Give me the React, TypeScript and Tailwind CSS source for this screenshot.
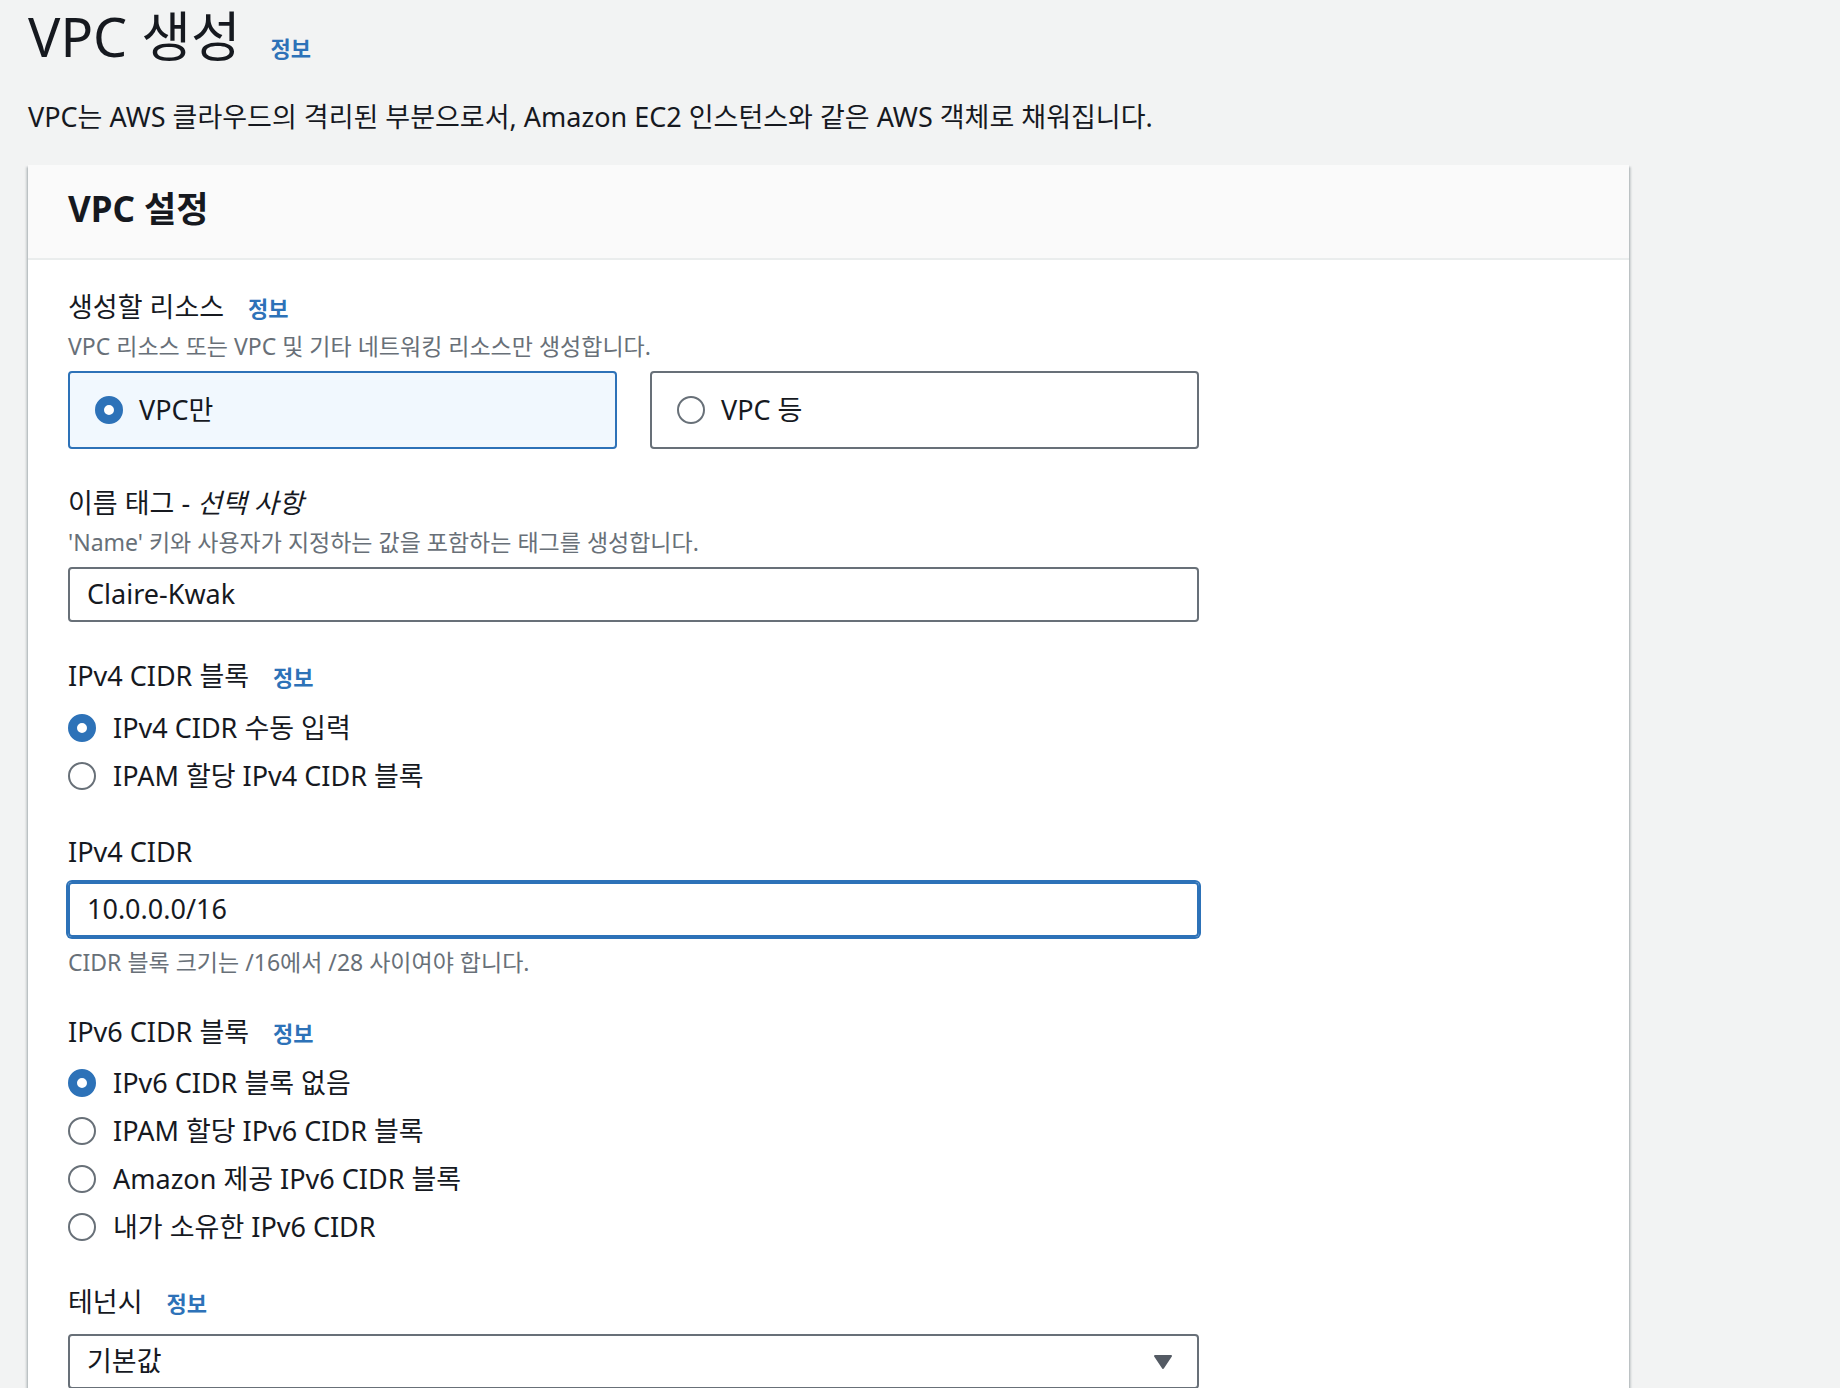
const InfoLink = ({ big }: { big?: boolean }) => (
  <a className={`${big ? "ml-[30px]" : "ml-[24px]"} text-[22px] font-bold leading-none text-[#2d72b8]`}>정보</a>
);

const Radio = ({ checked }: { checked?: boolean }) =>
  checked ? (
    <span className="box-border block h-[28px] w-[28px] shrink-0 rounded-full border-[9px] border-[#2d72b8] bg-white"></span>
  ) : (
    <span className="box-border block h-[28px] w-[28px] shrink-0 rounded-full border-2 border-[#687078] bg-white"></span>
  );

const RadioRow = ({ label, checked }: { label: string; checked?: boolean }) => (
  <div className="flex h-[48px] items-center gap-[17px]">
    <Radio checked={checked}></Radio>
    <span className="text-[27px] text-[#16191f]">{label}</span>
  </div>
);

const Label = ({ children, info }: { children: React.ReactNode; info?: boolean }) => (
  <div className="flex h-[36px] items-baseline text-[27px] leading-[36px] text-[#16191f]">
    <span>{children}</span>
    {info && <InfoLink></InfoLink>}
  </div>
);

const Hint = ({ children }: { children: React.ReactNode }) => (
  <p className="text-[23px] leading-[32px] text-[#687078]">{children}</p>
);

export default function App() {
  return (
    <div className="min-h-screen bg-[#f2f3f3] pl-[28px] pt-[4px] font-['Noto_Sans','Noto_Sans_CJK_KR',sans-serif] text-[#16191f]">
      <div className="flex items-baseline">
        <h1 className="text-[54px] leading-[64px]">VPC 생성</h1>
        <InfoLink big></InfoLink>
      </div>
      <p className="mt-[31px] text-[27px] leading-[36px]">
        VPC는 AWS 클라우드의 격리된 부분으로서, Amazon EC2 인스턴스와 같은 AWS 객체로 채워집니다.
      </p>

      <div className="mt-[30px] w-[1601px] bg-white shadow-[0_2px_2px_0_rgba(0,28,36,0.3),2px_2px_2px_0_rgba(0,28,36,0.15),-2px_2px_2px_0_rgba(0,28,36,0.15)]">
        <div className="border-b-2 border-[#eaeded] bg-[#fafafa] px-[40px] pb-[27px] pt-[22px]">
          <h2 className="text-[35px] font-bold leading-[44px]">VPC 설정</h2>
        </div>

        <div className="w-[1211px] px-[40px] pb-[60px] pt-[29px]">
          <Label info>생성할 리소스</Label>
          <div className="mt-[5px]">
            <Hint>VPC 리소스 또는 VPC 및 기타 네트워킹 리소스만 생성합니다.</Hint>
          </div>
          <div className="mt-[9px] flex gap-[33px]">
            <div className="flex h-[78px] w-[549px] items-center gap-[16px] rounded-[4px] border-2 border-[#2d72b8] bg-[#f1f8fe] pl-[25px]">
              <Radio checked></Radio>
              <span className="text-[27px]">VPC만</span>
            </div>
            <div className="flex h-[78px] w-[549px] items-center gap-[16px] rounded-[4px] border-2 border-[#687078] bg-white pl-[25px]">
              <Radio></Radio>
              <span className="text-[27px]">VPC 등</span>
            </div>
          </div>

          <div className="mt-[36px]">
            <Label>
              이름 태그 - <i>선택 사항</i>
            </Label>
          </div>
          <div className="mt-[5px]">
            <Hint>'Name' 키와 사용자가 지정하는 값을 포함하는 태그를 생성합니다.</Hint>
          </div>
          <div className="mt-[9px] flex h-[55px] items-center rounded-[4px] border-2 border-[#687078] px-[17px] text-[27px]">
            Claire-Kwak
          </div>

          <div className="mt-[36px]">
            <Label info>IPv4 CIDR 블록</Label>
          </div>
          <div className="mt-[10px]">
            <RadioRow checked label="IPv4 CIDR 수동 입력"></RadioRow>
            <RadioRow label="IPAM 할당 IPv4 CIDR 블록"></RadioRow>
          </div>

          <div className="mt-[34px]">
            <Label>IPv4 CIDR</Label>
          </div>
          <div className="mt-[12px] flex h-[55px] items-center rounded-[4px] border-2 border-[#2d72b8] px-[17px] text-[27px] shadow-[0_0_0_2px_#2d72b8]">
            10.0.0.0/16
          </div>
          <div className="mt-[9px]">
            <Hint>CIDR 블록 크기는 /16에서 /28 사이여야 합니다.</Hint>
          </div>

          <div className="mt-[36px]">
            <Label info>IPv6 CIDR 블록</Label>
          </div>
          <div className="mt-[9px]">
            <RadioRow checked label="IPv6 CIDR 블록 없음"></RadioRow>
            <RadioRow label="IPAM 할당 IPv6 CIDR 블록"></RadioRow>
            <RadioRow label="Amazon 제공 IPv6 CIDR 블록"></RadioRow>
            <RadioRow label="내가 소유한 IPv6 CIDR"></RadioRow>
          </div>

          <div className="mt-[33px]">
            <Label info>테넌시</Label>
          </div>
          <div className="mt-[14px] flex h-[55px] items-center justify-between rounded-[4px] border-2 border-[#687078] pl-[17px] pr-[24px] text-[27px]">
            <span>기본값</span>
            <svg width="20" height="16" viewBox="0 0 20 16">
              <path d="M2 2 L18 2 L10 14 Z" fill="#545b64" stroke="#545b64" strokeWidth="2" strokeLinejoin="round" />
            </svg>
          </div>
        </div>
      </div>
    </div>
  );
}
